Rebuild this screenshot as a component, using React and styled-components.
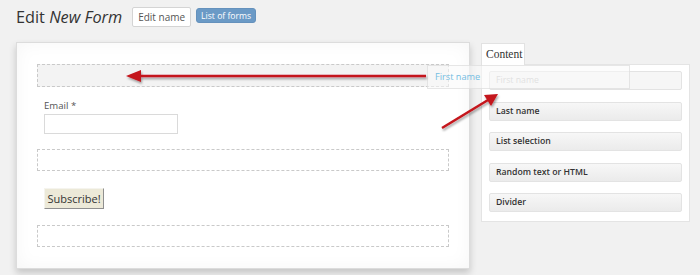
import styled, { createGlobalStyle } from "styled-components";

const Global = createGlobalStyle`
  html, body { margin: 0; background: #f1f1f1; }
  body { font-family: "Open Sans", "Liberation Sans", sans-serif; color: #333; }
`;

const Page = styled.div`
  position: relative;
  width: 700px;
  height: 275px;
  padding: 0 0 0 16px;
  box-sizing: border-box;
  overflow: hidden;
`;

const Header = styled.div`
  display: flex;
  align-items: center;
  height: 34px;
  gap: 5px;
`;

const Title = styled.h1`
  margin: 0 5px 0 0;
  font-size: 16.3px;
  font-weight: 400;
  color: #333;
  em { font-style: italic; }
`;

const HeadButton = styled.span`
  display: inline-flex;
  align-items: center;
  box-sizing: border-box;
  height: ${p => (p.$primary ? "15px" : "20px")};
  padding: 0 ${p => (p.$primary ? "4px" : "5px")};
  font-size: ${p => (p.$primary ? "8.6px" : "10px")};
  border-radius: ${p => (p.$primary ? "3px" : "2px")};
  background: ${p => (p.$primary ? "#6b9ac6" : "#fff")};
  color: ${p => (p.$primary ? "#fff" : "#555")};
  border: 1px solid ${p => (p.$primary ? "#6591bc" : "#d4d4d4")};
  margin-top: ${p => (p.$primary ? "-3px" : "0")};
`;

const Main = styled.div`
  display: flex;
  align-items: flex-start;
  gap: 11px;
  margin-top: 8px;
`;

const FormPanel = styled.div`
  flex: 0 0 454px;
  box-sizing: border-box;
  background: #fff;
  border: 1px solid #dcdcdc;
  box-shadow: 0 4px 7px rgba(0, 0, 0, 0.18), inset 0 0 18px rgba(0, 0, 0, 0.04);
  padding: 21px 20px 21px;
  display: flex;
  flex-direction: column;
`;

const DropZone = styled.div`
  height: ${p => (p.$h || 22)}px;
  box-sizing: border-box;
  border: 1px dashed #c9c9c9;
  background: ${p => (p.$active ? "#f3f3f3" : "#fff")};
`;

const Field = styled.div`
  display: flex;
  flex-direction: column;
  padding: 0 7px;
  margin: 11px 0 15px;
`;

const Label = styled.label`
  font-size: 9.6px;
  line-height: 16px;
  color: #555;
`;

const Input = styled.div`
  width: 134px;
  height: 20px;
  box-sizing: border-box;
  border: 1px solid #dadada;
  background: #fff;
`;

const ButtonRow = styled.div`
  padding: 0 7px;
  margin: 15px 0 16px;
`;

const Subscribe = styled.button`
  width: 60px;
  height: 21px;
  padding: 0;
  font-family: "Open Sans", "Liberation Sans", sans-serif;
  font-size: 11px;
  color: #333;
  background: #ece9d8;
  border: 1px solid;
  border-color: #f5f4ee #8f8f8f #8f8f8f #f5f4ee;
`;

const Side = styled.div`
  flex: 0 0 209px;
  display: flex;
  flex-direction: column;
  margin-top: 1px;
`;

const Tab = styled.div`
  align-self: flex-start;
  width: 44px;
  height: 22px;
  box-sizing: border-box;
  padding-left: 4px;
  font-family: "Liberation Serif", serif;
  font-size: 11.5px;
  line-height: 21px;
  color: #333;
  background: #fff;
  border: 1px solid #e2e2e2;
  border-bottom: none;
  margin-bottom: -1px;
  position: relative;
  z-index: 1;
`;

const Palette = styled.div`
  box-sizing: border-box;
  height: 158px;
  background: #fff;
  border: 1px solid #e4e4e4;
  padding: 6px 7px;
  display: flex;
  flex-direction: column;
  gap: 11.5px;
`;

const PaletteItem = styled.div`
  height: 19px;
  box-sizing: border-box;
  padding-left: 6px;
  font-size: 8.7px;
  line-height: 17px;
  border: 1px solid #e3e3e3;
  border-radius: 2px;
  color: ${p => (p.$ghost ? "#c2c2c2" : "#333")};
  background: ${p => (p.$ghost ? "#f6f6f6" : "linear-gradient(#f7f7f7, #ebebeb)")};
  font-weight: ${p => (p.$ghost ? 400 : 600)};
`;

const DragGhost = styled.div`
  position: absolute;
  left: 427px;
  top: 65px;
  width: 203px;
  height: 24px;
  box-sizing: border-box;
  padding-left: 7px;
  font-size: 9.2px;
  line-height: 22px;
  color: #74bde2;
  background: rgba(250, 250, 250, 0.55);
  border: 1px solid rgba(215, 215, 215, 0.6);
  z-index: 2;
`;

const Arrows = styled.svg`
  position: absolute;
  left: 0;
  top: 0;
  z-index: 3;
  pointer-events: none;
`;

const items = ["Last name", "List selection", "Random text or HTML", "Divider"];

export default function App() {
  return (
    <Page>
      <Global />
      <Header>
        <Title>
          Edit <em>New Form</em>
        </Title>
        <HeadButton>Edit name</HeadButton>
        <HeadButton $primary>List of forms</HeadButton>
      </Header>
      <Main>
        <FormPanel>
          <DropZone $active $h={23} />
          <Field>
            <Label>Email *</Label>
            <Input />
          </Field>
          <DropZone />
          <ButtonRow>
            <Subscribe>Subscribe!</Subscribe>
          </ButtonRow>
          <DropZone />
        </FormPanel>
        <Side>
          <Tab>Content</Tab>
          <Palette>
            <PaletteItem $ghost>First name</PaletteItem>
            {items.map(i => (
              <PaletteItem key={i}>{i}</PaletteItem>
            ))}
          </Palette>
        </Side>
      </Main>
      <DragGhost>First name</DragGhost>
      <Arrows width="700" height="275" viewBox="0 0 700 275">
        <defs>
          <filter id="sh" x="-10%" y="-50%" width="120%" height="200%">
            <feDropShadow dx="1" dy="2" stdDeviation="1.2" floodColor="#000" floodOpacity="0.35" />
          </filter>
        </defs>
        <g filter="url(#sh)" fill="#c4141b" stroke="#c4141b">
          <line x1="426" y1="76" x2="138" y2="76" strokeWidth="2.5" />
          <polygon points="126,76 141,70 141,82" stroke="none" />
          <line x1="442" y1="128" x2="488" y2="100" strokeWidth="2.5" />
          <polygon points="498,94 484,95 491,106" stroke="none" />
        </g>
      </Arrows>
    </Page>
  );
}
